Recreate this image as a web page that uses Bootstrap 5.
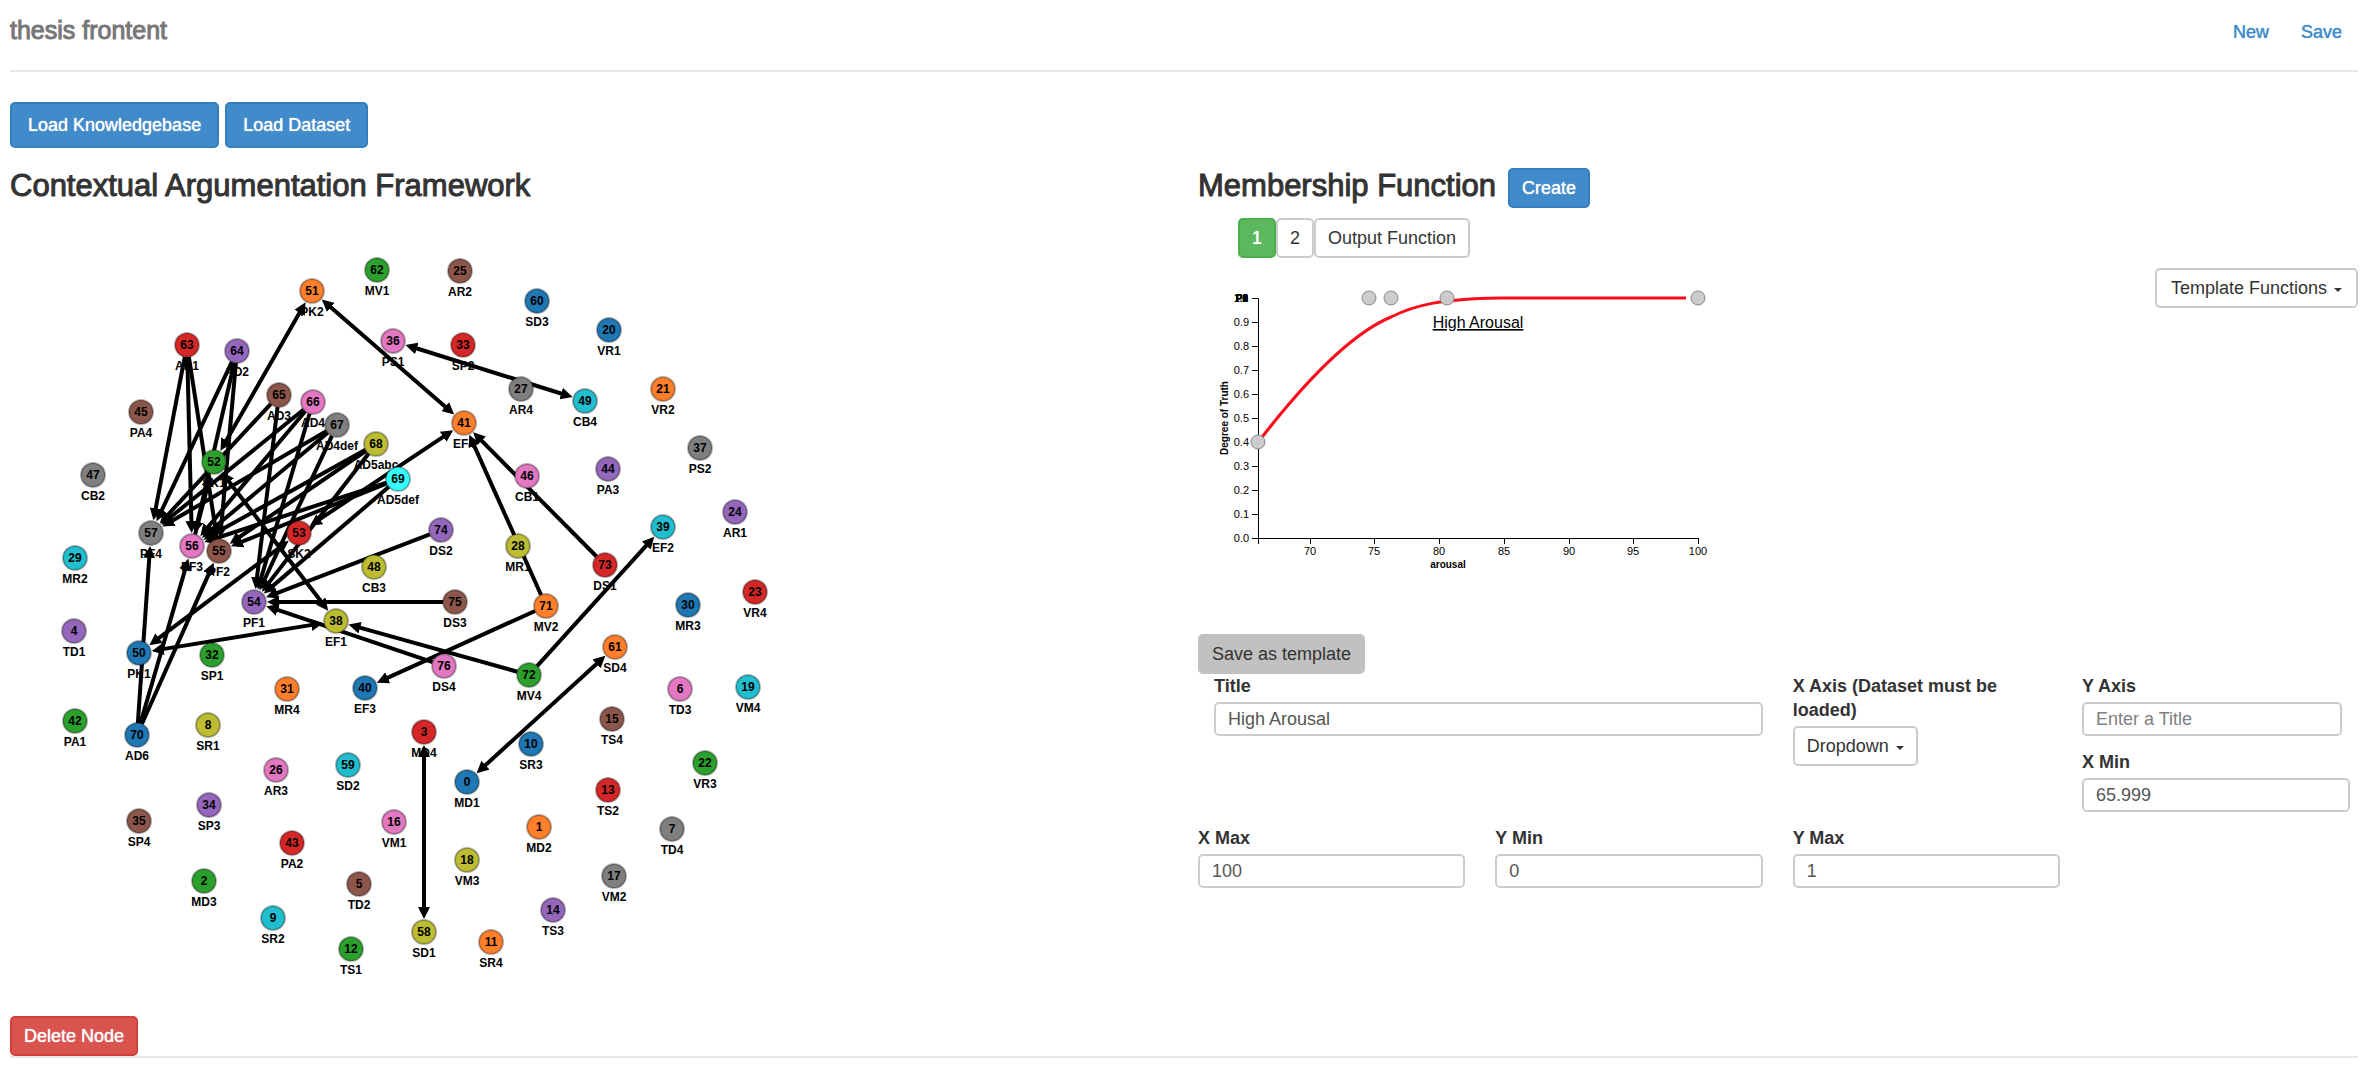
<!DOCTYPE html>
<html lang="en">
<head>
<meta charset="utf-8">
<meta name="viewport" content="width=device-width, initial-scale=1">
<title>thesis frontent</title>
<link href="https://cdn.jsdelivr.net/npm/bootstrap@5.3.0/dist/css/bootstrap.min.css" rel="stylesheet">
<style>
  body { font-family: "Liberation Sans", Arial, sans-serif; font-size: 18px; line-height: 24px; color: #333; background: #fff; }
  .page { padding: 0 12px 0 10px; }
  .topbar { height: 70px; padding-top: 10px; }
  .brand { font-size: 25px; line-height: 40px; color: #777; -webkit-text-stroke: 1px #777; }
  .top-link { color: #428bca; text-decoration: none; text-shadow: 0 0 1px #428bca; }
  .top-nav { gap: 32px; padding-right: 16px; line-height: 44px; }
  .rule { border-top: 2px solid #e5e5e5; opacity: 1; margin: 0; }
  .toolbar { padding: 30px 0 18px; gap: 6px; }
  .panes { --bs-gutter-x: 28px; }
  .pane-title { font-size: 31px; line-height: 40px; font-weight: 400; -webkit-text-stroke: 1px #333; margin: 0; }
  .pane-head { gap: 12px; height: 42px; }
  .btn { --bs-btn-font-size: 18px; --bs-btn-line-height: 24px; --bs-btn-padding-y: 6px; --bs-btn-padding-x: 12px; --bs-btn-border-width: 2px; --bs-btn-border-radius: 5px; }
  .btn-tall { --bs-btn-padding-y: 9px; --bs-btn-padding-x: 16px; }
  .btn-primary { --bs-btn-bg: #428bca; --bs-btn-border-color: #357ebd; text-shadow: 0 0 1px #fff; }
  .btn-success { --bs-btn-bg: #5cb85c; --bs-btn-border-color: #4cae4c; text-shadow: 0 0 1px #fff; }
  .btn-danger { --bs-btn-bg: #d9534f; --bs-btn-border-color: #d43f3a; text-shadow: 0 0 1px #fff; }
  .btn-plain { --bs-btn-color: #333; --bs-btn-bg: #fff; --bs-btn-border-color: #ccc; }
  .btn-grey { --bs-btn-color: #333; --bs-btn-bg: #c1c1c1; --bs-btn-border-color: #c1c1c1; }
  .btn.dropdown-toggle::after { border-top-width: 4px; border-left-width: 4px; border-right-width: 4px; margin-left: 7px; vertical-align: 2px; }
  .btn-wide { --bs-btn-padding-x: 14px; }
  .tabs { padding: 10px 0 10px 40px; }
  .axes-form { display: grid; grid-template-columns: 862fr 268fr; column-gap: 22px; padding-right: 8px; }
  .fields { --bs-gutter-x: 30px; }
  .fields-first { height: 152px; }
  .field-next { margin-top: 14px; }
  .form-label { display: block; font-weight: 700; margin-bottom: 4px; }
  .form-control { height: 34px; padding: 0 12px; font-size: 18px; line-height: 24px; color: #555; border: 2px solid #ccc; border-radius: 5px; }
  .form-control::placeholder { color: #808080; }
  svg { display: block; max-width: 100%; }
  svg text { fill: #000; }
  .graph text { font-size: 12px; font-weight: 700; text-anchor: middle; }
  .graph line { stroke: #000; stroke-width: 4px; }
  .graph circle { stroke: rgba(0, 0, 0, .3); stroke-width: 2px; }
  .chart .axis { fill: none; stroke: #000; }
  .chart .tick { font-size: 11px; }
  .chart .axis-name { font-size: 10px; font-weight: 700; text-anchor: middle; }
  .chart .overlap { font-size: 10px; font-weight: 700; text-anchor: end; }
  .chart .curve { fill: none; stroke: #fc0d1b; stroke-width: 3px; }
  .chart .curve-name { font-size: 16px; text-anchor: middle; text-decoration: underline; }
  .chart circle { fill: #ccc; stroke: #888; }
</style>
</head>
<body>
<div class="page">
  <header class="topbar d-flex justify-content-between">
    <div class="brand">thesis frontent</div>
    <nav class="top-nav d-flex">
      <a class="top-link" href="#new">New</a>
      <a class="top-link" href="#save">Save</a>
    </nav>
  </header>
  <hr class="rule">
  <div class="toolbar d-flex">
    <button type="button" class="btn btn-primary btn-tall">Load Knowledgebase</button>
    <button type="button" class="btn btn-primary btn-tall">Load Dataset</button>
  </div>
  <main class="row panes">
    <section class="col-6">
      <h2 class="pane-title">Contextual Argumentation Framework</h2>
      <svg class="graph" id="graph" width="780" height="810" viewBox="10 206 780 810" role="img" aria-label="Argument graph"></svg>
      <button type="button" class="btn btn-danger">Delete Node</button>
    </section>
    <section class="col-6">
      <div class="pane-head d-flex">
        <h2 class="pane-title">Membership Function</h2>
        <button type="button" class="btn btn-primary align-self-end">Create</button>
      </div>
      <div class="tabs d-flex">
        <button type="button" class="btn btn-success">1</button>
        <button type="button" class="btn btn-plain">2</button>
        <button type="button" class="btn btn-plain">Output Function</button>
      </div>
      <div class="d-flex justify-content-between align-items-start">
        <svg class="chart" id="chart" width="600" height="366" viewBox="1198 268 600 366" role="img" aria-label="Membership function High Arousal"></svg>
        <button type="button" class="btn btn-plain btn-wide dropdown-toggle" data-bs-toggle="dropdown">Template Functions</button>
      </div>
      <button type="button" class="btn btn-grey d-block">Save as template</button>
      <form class="axes-form">
        <div>
          <div class="row fields fields-first">
            <div class="col-8"><div class="ps-3">
              <label class="form-label" for="fTitle">Title</label>
              <input class="form-control" id="fTitle" type="text" value="High Arousal">
            </div></div>
            <div class="col-4">
              <label class="form-label" for="fXAxis">X Axis (Dataset must be loaded)</label>
              <button type="button" id="fXAxis" class="btn btn-plain dropdown-toggle" data-bs-toggle="dropdown">Dropdown</button>
            </div>
          </div>
          <div class="row fields">
            <div class="col-4">
              <label class="form-label" for="fXMax">X Max</label>
              <input class="form-control" id="fXMax" type="text" value="100">
            </div>
            <div class="col-4">
              <label class="form-label" for="fYMin">Y Min</label>
              <input class="form-control" id="fYMin" type="text" value="0">
            </div>
            <div class="col-4">
              <label class="form-label" for="fYMax">Y Max</label>
              <input class="form-control" id="fYMax" type="text" value="1">
            </div>
          </div>
        </div>
        <div>
          <div class="pe-2">
            <label class="form-label" for="fYAxis">Y Axis</label>
            <input class="form-control" id="fYAxis" type="text" placeholder="Enter a Title">
          </div>
          <div class="field-next">
            <label class="form-label" for="fXMin">X Min</label>
            <input class="form-control" id="fXMin" type="text" value="65.999">
          </div>
        </div>
      </form>
    </section>
  </main>
  <hr class="rule">
</div>
<script src="https://cdn.jsdelivr.net/npm/bootstrap@5.3.0/dist/js/bootstrap.bundle.min.js"></script>
<script>
const NS = 'http://www.w3.org/2000/svg';
function add(parent, tag, attrs, text) {
  const el = document.createElementNS(NS, tag);
  for (const k in attrs) el.setAttribute(k, attrs[k]);
  if (text !== undefined) el.textContent = text;
  parent.appendChild(el);
  return el;
}

/* argument graph: [id, label, x, y] */
const palette = ['#1f77b4', '#ff7f2a', '#2ca02c', '#d62728', '#9467bd', '#8c564b', '#e377c2', '#7f7f7f', '#bcbd32', '#20becf'];
const nodes = [
  [0,'MD1',467,782],[1,'MD2',539,827],[2,'MD3',204,881],[3,'MD4',424,732],[4,'TD1',74,631],[5,'TD2',359,884],
  [6,'TD3',680,689],[7,'TD4',672,829],[8,'SR1',208,725],[9,'SR2',273,918],[10,'SR3',531,744],[11,'SR4',491,942],
  [12,'TS1',351,949],[13,'TS2',608,790],[14,'TS3',553,910],[15,'TS4',612,719],[16,'VM1',394,822],[17,'VM2',614,876],
  [18,'VM3',467,860],[19,'VM4',748,687],[20,'VR1',609,330],[21,'VR2',663,389],[22,'VR3',705,763],[23,'VR4',755,592],
  [24,'AR1',735,512],[25,'AR2',460,271],[26,'AR3',276,770],[27,'AR4',521,389],[28,'MR1',518,546],[29,'MR2',75,558],
  [30,'MR3',688,605],[31,'MR4',287,689],[32,'SP1',212,655],[33,'SP2',463,345],[34,'SP3',209,805],[35,'SP4',139,821],
  [36,'PS1',393,341],[37,'PS2',700,448],[38,'EF1',336,621],[39,'EF2',663,527],[40,'EF3',365,688],[41,'EF4',464,423],
  [42,'PA1',75,721],[43,'PA2',292,843],[44,'PA3',608,469],[45,'PA4',141,412],[46,'CB1',527,476],[47,'CB2',93,475],
  [48,'CB3',374,567],[49,'CB4',585,401],[50,'PK1',139,653],[51,'PK2',312,291],[52,'SK1',214,462],[53,'SK2',299,533],
  [54,'PF1',254,602],[55,'PF2',219,551],[56,'PF3',192,546],[57,'PF4',151,533],[58,'SD1',424,932],[59,'SD2',348,765],
  [60,'SD3',537,301],[61,'SD4',615,647],[62,'MV1',377,270],[63,'AD1',187,345],[64,'AD2',237,351],[65,'AD3',279,395],
  [66,'AD4',313,402],[67,'AD4def',337,425],[68,'AD5abc',376,444],[69,'AD5def',398,479],[70,'AD6',137,735],
  [71,'MV2',546,606],[72,'MV4',529,675],[73,'DS1',605,565],[74,'DS2',441,530],[75,'DS3',455,602],[76,'DS4',444,666]
];
/* [from, to, arrow at both ends] */
const links = [
  [63,57],[63,56],[63,55],[64,57],[64,56],[64,55],[65,57],[65,54],[66,57],[66,56],[66,54],[67,57],[67,56],[67,54],
  [68,56],[68,55],[68,54],[69,56],[69,55],[69,54],[70,57],[70,56],[70,55],[71,41],[71,40],[72,38],[72,39],[73,41],
  [74,54],[75,54],[76,54],[56,52],[51,52,1],[51,41,1],[36,49,1],[53,41,1],[53,50,1],[52,38,1],[50,38,1],[0,61,1],[3,58,1]
];
const graph = document.getElementById('graph');
const defs = add(graph, 'defs', {});
const marker = add(defs, 'marker', { id: 'head', markerUnits: 'userSpaceOnUse', markerWidth: 12, markerHeight: 12, refX: 4, refY: 6, orient: 'auto-start-reverse' });
add(marker, 'path', { d: 'M0 0L12 6L0 12Z' });
const at = {};
nodes.forEach(n => at[n[0]] = n);
links.forEach(([a, b, both]) => {
  const [, , x1, y1] = at[a], [, , x2, y2] = at[b];
  const d = Math.hypot(x2 - x1, y2 - y1), ux = (x2 - x1) / d, uy = (y2 - y1) / d;
  const s = both ? 21 : 12, e = 21;
  const attrs = { x1: x1 + ux * s, y1: y1 + uy * s, x2: x2 - ux * e, y2: y2 - uy * e, 'marker-end': 'url(#head)' };
  if (both) attrs['marker-start'] = 'url(#head)';
  add(graph, 'line', attrs);
});
nodes.forEach(([id, label, x, y]) => {
  const g = add(graph, 'g', {});
  add(g, 'circle', { cx: x, cy: y, r: 12, fill: id === 69 ? '#33ffff' : palette[id % 10] });
  add(g, 'text', { x, y: y + 4 }, id);
  add(g, 'text', { x, y: y + 25 }, label);
});

/* membership function chart */
const chart = document.getElementById('chart');
const sx = v => Math.round(1258 + (v - 66) * 440 / 34), sy = v => Math.round(538 - v * 240);
add(chart, 'path', { class: 'axis', d: 'M1252 298.5H1258.5V538.5H1252M1258.5 544V538.5H1698.5V544' });
for (let i = 0; i < 10; i++) {
  add(chart, 'path', { class: 'axis', d: `M1252 ${sy(i / 10) + .5}h6` });
  add(chart, 'text', { class: 'tick', 'text-anchor': 'end', x: 1249, y: sy(i / 10) + 4 }, (i / 10).toFixed(1));
}
for (let v = 70; v <= 100; v += 5) {
  add(chart, 'path', { class: 'axis', d: `M${sx(v) + .5} 538v6` });
  add(chart, 'text', { class: 'tick', 'text-anchor': 'middle', x: sx(v), y: 555 }, v);
}
['1.0', 'P0', 'P1', 'P2', 'P3', 'P4'].forEach(t => add(chart, 'text', { class: 'overlap', x: 1248, y: 302 }, t));
add(chart, 'text', { class: 'axis-name', x: 1448, y: 568 }, 'arousal');
add(chart, 'text', { class: 'axis-name', transform: 'translate(1228 418) rotate(-90)' }, 'Degree of Truth');
add(chart, 'path', { class: 'curve', d: 'M1259 441C1310 375 1355 332 1391 317C1415 305 1440 299 1500 298L1686 298' });
add(chart, 'text', { class: 'curve-name', x: 1478, y: 328 }, 'High Arousal');
[[66, .4], [74.6, 1], [76.3, 1], [80.6, 1], [100, 1]].forEach(([v, d]) => add(chart, 'circle', { cx: sx(v), cy: sy(d), r: 7 }));
</script>
</body>
</html>
